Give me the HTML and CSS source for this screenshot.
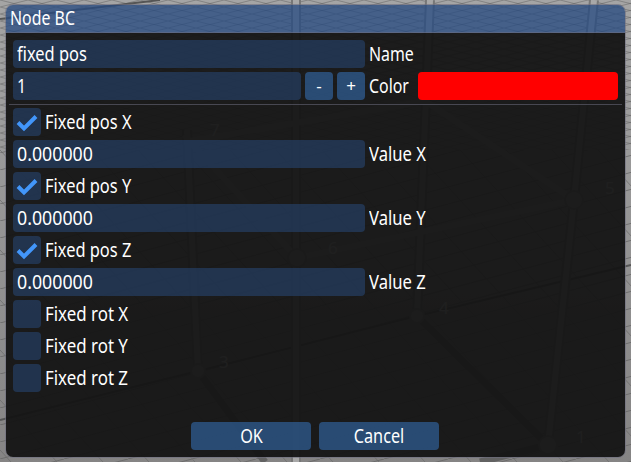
FILE: index.html
```html
<!DOCTYPE html>
<html lang="en">
<head>
<meta charset="utf-8">
<title>Node BC</title>
<link rel="stylesheet" href="styles.css">
</head>
<body>
<svg class="scene" viewBox="0 0 631 462" aria-hidden="true">
  <defs>
    <linearGradient id="floor" x2="0" y2="1"><stop stop-color="#a5a5a5"/><stop offset="1" stop-color="#858484"/></linearGradient>
    <pattern id="fine" width="28" height="7" patternUnits="userSpaceOnUse"><path d="M0 7L28 0M0 0L28 7" stroke="#606060" stroke-width=".5"/></pattern>
    <pattern id="coarse" width="64" height="17" patternUnits="userSpaceOnUse"><path d="M0 17L64 0" stroke="#606060" stroke-width=".7"/></pattern>
    <pattern id="cross" width="46" height="50" patternUnits="userSpaceOnUse"><path d="M0 0L46 50" stroke="#686868" stroke-width=".7"/></pattern>
  </defs>
  <rect width="631" height="462" fill="url(#floor)"/>
  <rect width="631" height="150" fill="url(#fine)"/>
  <rect y="150" width="631" height="312" fill="url(#coarse)"/>
  <rect y="150" width="631" height="312" fill="url(#cross)"/>
  <g class="axis"><path d="M0 19L160 0M0 420L198 371L417 316L631 265"/></g>
  <g class="shade"><path d="M198 371L265 462M417 316L548 445L480 462"/></g>
  <g class="beam-edge"><path d="M187 130L198 371M296 0V462M430 0L417 316M594 0L574 200L548 445"/></g>
  <g class="beam"><path d="M187 130L198 371M296 0V462M430 0L417 316M594 0L574 200L548 445M184 142L425 101L574 200L297 258L184 135"/></g>
  <g class="joint"><circle cx="297" cy="258" r="9"/><circle cx="574" cy="200" r="9"/><circle cx="417" cy="316" r="7"/><circle cx="198" cy="371" r="7"/><circle cx="548" cy="445" r="9"/></g>
  <g class="node-id"><text x="210" y="136">7</text><text x="328" y="254">6</text><text x="605" y="194">5</text><text x="439" y="314">4</text><text x="219" y="368">3</text><text x="576" y="443">1</text></g>
</svg>
<main class="window">
  <header class="title"><span class="t">Node BC</span></header>
  <div class="body">
    <div class="row"><div class="field"><span class="t pos">fixed pos</span></div><label class="t">Name</label></div>
    <div class="row"><div class="field short"><span class="t">1</span></div><button class="step"><span>-</span></button><button class="step"><span>+</span></button><label class="t color-label">Color</label><div class="swatch"></div></div>
    <hr>
    <div class="row"><div class="check"><svg viewBox="0 0 28 28"><path d="M5 14.5L11 20.5L23 8.5"/></svg></div><label class="t pos">Fixed pos X</label></div>
    <div class="row"><div class="field"><span class="t num">0.000000</span></div><label class="t value">Value X</label></div>
    <div class="row"><div class="check"><svg viewBox="0 0 28 28"><path d="M5 14.5L11 20.5L23 8.5"/></svg></div><label class="t pos">Fixed pos Y</label></div>
    <div class="row"><div class="field"><span class="t num">0.000000</span></div><label class="t value">Value Y</label></div>
    <div class="row"><div class="check"><svg viewBox="0 0 28 28"><path d="M5 14.5L11 20.5L23 8.5"/></svg></div><label class="t pos">Fixed pos Z</label></div>
    <div class="row"><div class="field"><span class="t num">0.000000</span></div><label class="t value">Value Z</label></div>
    <div class="row"><div class="check"></div><label class="t rot">Fixed rot X</label></div>
    <div class="row"><div class="check"></div><label class="t rot">Fixed rot Y</label></div>
    <div class="row"><div class="check"></div><label class="t rot">Fixed rot Z</label></div>
    <footer class="actions"><button class="action"><span class="t">OK</span></button><button class="action"><span class="t">Cancel</span></button></footer>
  </div>
</main>
</body>
</html>
```
FILE: styles.css
```css
* { box-sizing: border-box; }
body {
  margin: 0;
  width: 631px;
  height: 462px;
  overflow: hidden;
  padding: 4px 5px;
  color: #fff;
  font: 19.3px/28px "Noto Sans", sans-serif;
}
.scene { position: absolute; inset: 0; width: 631px; height: 462px; z-index: -1; }
.scene g { fill: none; }
.axis { stroke: #555; stroke-width: 2; }
.shade { stroke: #626262; stroke-width: 7; }
.beam-edge { stroke: #777; stroke-width: 10; }
.beam { stroke: #a8a8a8; stroke-width: 6; }
.scene .joint { fill: #a8a8a8; stroke: #888; stroke-width: 2; }
.scene .node-id { fill: #ddd; font-size: 17px; }
.window {
  width: 621px;
  height: 454px;
  border: 1px solid rgba(110, 110, 128, .6);
  border-radius: 8px;
  overflow: hidden;
}
.title {
  height: 28px;
  padding-left: 4px;
  line-height: 26px;
  background: rgba(38, 74, 128, .75);
  border-bottom: 1px solid rgba(110, 110, 128, .55);
}
.body {
  height: 424px;
  padding: 7px 7px 0;
  background: rgba(19, 19, 19, .94);
}
.t { display: inline-block; transform: scaleX(.824); transform-origin: 0 50%; white-space: pre; }
.pos { transform: scaleX(.852); }
.rot { transform: scaleX(.876); }
.value { transform: scaleX(.862); }
.num { transform: scaleX(.921); }
.row { display: flex; gap: 4px; height: 28px; margin-bottom: 4px; }
.field {
  width: 352px;
  padding-left: 4px;
  border-radius: 4px;
  background: rgba(41, 74, 122, .54);
}
.short { width: 288px; }
button {
  height: 28px;
  padding: 0;
  border: 0;
  border-radius: 4px;
  color: #fff;
  font: inherit;
  background: rgba(66, 150, 250, .4);
}
.step { width: 28px; font-size: 17px; }
.color-label { width: 45px; }
.swatch { width: 200px; border-radius: 4px; background: #f00; }
hr { height: 1px; margin: 0 -4px 3px; border: 0; background: rgba(110, 110, 128, .55); }
.check { width: 28px; border-radius: 4px; background: rgba(41, 74, 122, .54); }
.check svg { display: block; width: 28px; height: 28px; }
.check path { fill: none; stroke: #4296fa; stroke-width: 4; }
.actions { display: flex; justify-content: center; gap: 8px; margin: 30px 1px 0 0; }
.action { width: 120px; }
.action .t { transform: scaleX(.842); transform-origin: 50% 50%; }
```
